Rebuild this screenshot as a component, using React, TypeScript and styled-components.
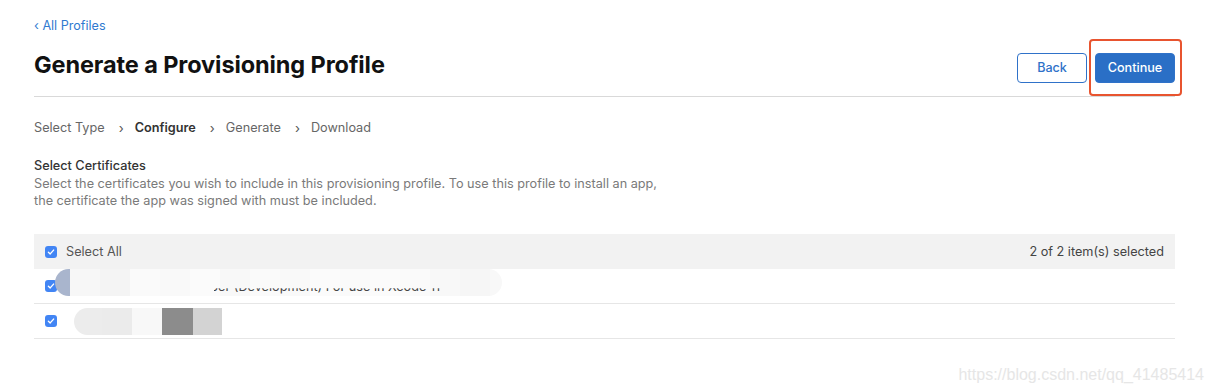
import styled, {createGlobalStyle} from "styled-components";

const GlobalStyle = createGlobalStyle`
    body {
        margin: 0;
        background: #ffffff;
        font-family: Inter, "Noto Sans", "Liberation Sans", sans-serif;
        color: #333333;
    }
`;

const Page = styled.div`
    position: relative;
    width: 1214px;
    height: 391px;
    padding: 18px 39px 0 34px;
    box-sizing: border-box;
    overflow: hidden;
`;

const BackLink = styled.a`
    display: block;
    font-size: 12.6px;
    color: #2f7ad0;
    text-decoration: none;
    line-height: 16px;
`;

const HeaderRow = styled.div`
    display: flex;
    align-items: center;
    justify-content: space-between;
    height: 55px;
    margin-top: 7px;
    border-bottom: 1px solid #d9d9d9;
`;

const Title = styled.h1`
    margin: 0 0 8px;
    font-size: 23.5px;
    font-weight: 700;
    color: #111111;
    letter-spacing: -0.1px;
`;

const Actions = styled.div`
    display: flex;
    align-items: center;
    gap: 2px;
    margin-bottom: 2px;
`;

const Button = styled.button<{$primary?: boolean}>`
    height: 30px;
    padding: 0 12px;
    border-radius: 4px;
    font-family: inherit;
    font-size: 12.6px;
    font-weight: 500;
    border: 1px solid #2f72c9;
    background: ${p => (p.$primary ? "#2a6fc6" : "#ffffff")};
    color: ${p => (p.$primary ? "#ffffff" : "#2f72c9")};
    cursor: pointer;
`;

const BackButton = styled(Button)`
    width: 70px;
`;

const Highlight = styled.div`
    display: flex;
    align-items: center;
    justify-content: center;
    width: 93px;
    height: 57px;
    padding-right: 1px;
    border: 2px solid #e8542f;
    border-radius: 4px;
    box-sizing: border-box;
    margin-right: -7px;
`;

const Steps = styled.div`
    display: flex;
    align-items: center;
    margin-top: 23px;
    font-size: 12.7px;
    color: #666666;
    line-height: 16px;
`;

const Step = styled.span<{$active?: boolean}>`
    font-weight: ${p => (p.$active ? 600 : 400)};
    color: ${p => (p.$active ? "#333333" : "#666666")};
`;

const Chevron = styled.span`
    display: inline-block;
    margin: 0 11px 0 14px;
    color: #555555;
    font-size: 13px;
`;

const SectionTitle = styled.div`
    margin-top: 21px;
    font-size: 12.7px;
    font-weight: 500;
    color: #333333;
    line-height: 17px;
`;

const Description = styled.p`
    margin: 1px 0 0;
    font-size: 12.7px;
    line-height: 17px;
    color: #7a7a7a;
`;

const Table = styled.div`
    margin-top: 25px;
`;

const HeadRow = styled.div`
    display: flex;
    align-items: center;
    height: 35px;
    padding: 0 11px;
    background: #f2f2f2;
    font-size: 12.7px;
    color: #555555;
`;

const Row = styled.div`
    position: relative;
    display: flex;
    align-items: center;
    height: 34px;
    padding: 0 11px;
    border-bottom: 1px solid #e6e6e6;
`;

const Count = styled.span`
    margin-left: auto;
    color: #444444;
`;

const Label = styled.span`
    margin-left: 9px;
`;

const Box = styled.span`
    display: inline-flex;
    align-items: center;
    justify-content: center;
    width: 12px;
    height: 12px;
    border-radius: 3px;
    background: #4285f4;
    flex-shrink: 0;
`;

const Mosaic = styled.div<{$left: number; $top: number; $round: string}>`
    position: absolute;
    left: ${p => p.$left}px;
    top: ${p => p.$top}px;
    display: flex;
    height: 27px;
    border-radius: ${p => p.$round};
    overflow: hidden;
`;

const Tile = styled.span<{$w: number; $c: string}>`
    width: ${p => p.$w}px;
    background: ${p => p.$c};
`;

const HiddenText = styled.span`
    position: absolute;
    left: 135px;
    top: 10px;
    font-size: 12.7px;
    line-height: 16px;
    color: #444444;
    clip-path: inset(58% 0 0 45px);
    z-index: 1;
`;

const Watermark = styled.div`
    position: absolute;
    right: 10px;
    bottom: 7px;
    font-family: "Liberation Sans", Arial, sans-serif;
    font-size: 16px;
    color: #e6e6e6;
`;

const Check = () => (
    <Box>
        <svg width="8" height="8" viewBox="0 0 8 8">
            <path d="M1.4 4.2 L3.2 5.9 L6.6 2.1" fill="none" stroke="#ffffff" strokeWidth="1.4"
                  strokeLinecap="round" strokeLinejoin="round"/>
        </svg>
    </Box>
);

const rowOne: [number, string][] = [
    [15, "#a9b5cd"], [30, "#f7f7f7"], [30, "#f4f4f4"], [30, "#fafafa"], [30, "#f9f9f9"],
    [30, "#fbfbfb"], [30, "#f8f8f8"], [30, "#fafafa"], [30, "#f9f9f9"], [30, "#fbfbfb"],
    [30, "#fafafa"], [30, "#fbfbfb"], [30, "#fafafa"], [30, "#f8f8f8"], [30, "#f6f6f6"],
    [12, "#f8f8f8"],
];

const rowTwo: [number, string][] = [
    [28, "#ececec"], [30, "#ebebeb"], [30, "#f8f8f8"], [31, "#8c8c8c"], [29, "#d3d3d3"],
];

export default function App() {
    return <>
        <GlobalStyle/>
        <Page>
            <BackLink href="#">‹ All Profiles</BackLink>
            <HeaderRow>
                <Title>Generate a Provisioning Profile</Title>
                <Actions>
                    <BackButton>Back</BackButton>
                    <Highlight>
                        <Button $primary>Continue</Button>
                    </Highlight>
                </Actions>
            </HeaderRow>

            <Steps>
                <Step>Select Type</Step>
                <Chevron>›</Chevron>
                <Step $active>Configure</Step>
                <Chevron>›</Chevron>
                <Step>Generate</Step>
                <Chevron>›</Chevron>
                <Step>Download</Step>
            </Steps>

            <SectionTitle>Select Certificates</SectionTitle>
            <Description>
                Select the certificates you wish to include in this provisioning profile. To use this profile to install an app,
                <br/>
                the certificate the app was signed with must be included.
            </Description>

            <Table>
                <HeadRow>
                    <Check/>
                    <Label>Select All</Label>
                    <Count>2 of 2 item(s) selected</Count>
                </HeadRow>
                <Row>
                    <Check/>
                    <Mosaic $left={21} $top={0} $round="14px">
                        {rowOne.map(([w, c], i) => <Tile key={i} $w={w} $c={c}/>)}
                    </Mosaic>
                    <HiddenText>Developer (Development) For use in Xcode 11</HiddenText>
                </Row>
                <Row>
                    <Check/>
                    <Mosaic $left={40} $top={4} $round="14px 0 0 14px">
                        {rowTwo.map(([w, c], i) => <Tile key={i} $w={w} $c={c}/>)}
                    </Mosaic>
                </Row>
            </Table>

            <Watermark>https://blog.csdn.net/qq_41485414</Watermark>
        </Page>
    </>;
}
